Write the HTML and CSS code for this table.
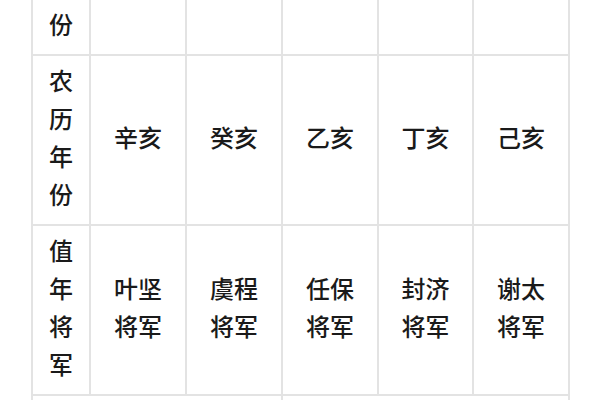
FILE: index.html
```html
<!DOCTYPE html>
<html lang="zh-CN">
<head>
<meta charset="utf-8">
<link rel="stylesheet" href="styles.css">
</head>
<body>
<div class="sheet">
  <div class="cell head top">份</div>
  <div class="cell top"></div>
  <div class="cell top"></div>
  <div class="cell top"></div>
  <div class="cell top"></div>
  <div class="cell top"></div>

  <div class="cell head">农历年份</div>
  <div class="cell">辛亥</div>
  <div class="cell">癸亥</div>
  <div class="cell">乙亥</div>
  <div class="cell">丁亥</div>
  <div class="cell">己亥</div>

  <div class="cell head">值年将军</div>
  <div class="cell">叶坚将军</div>
  <div class="cell">虞程将军</div>
  <div class="cell">任保将军</div>
  <div class="cell">封济将军</div>
  <div class="cell">谢太将军</div>

  <div class="cell span3 tail"></div>
  <div class="cell span3 tail"></div>
</div>
</body>
</html>
```
FILE: styles.css
```css
html, body {
  margin: 0;
  padding: 0;
  background: #ffffff;
}

body {
  font-family: "Noto Sans CJK SC", "Noto Sans", sans-serif;
  color: #1a1a1a;
}

.sheet {
  display: grid;
  grid-template-columns: 58px 96px 96px 96px 95px 96px;
  width: 537px;
  margin: 0 0 0 31px;
  border-left: 2px solid #e3e3e3;
}

.cell {
  display: flex;
  align-items: center;
  justify-content: center;
  text-align: center;
  box-sizing: border-box;
  padding: 5px 14px 11px;
  border-right: 2px solid #e3e3e3;
  border-bottom: 2px solid #e3e3e3;
  font-size: 24px;
  font-weight: 500;
  line-height: 38px;
  min-height: 170px;
}

.head {
  padding-left: 17px;
  padding-right: 17px;
}

.top {
  min-height: 53px;
  align-items: flex-end;
}

.span3 {
  grid-column: span 3;
}

.tail {
  min-height: 40px;
}
```
